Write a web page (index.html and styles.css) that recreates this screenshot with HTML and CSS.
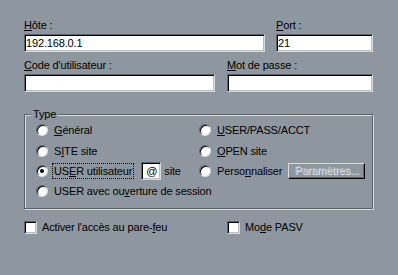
FILE: index.html
```html
<!DOCTYPE html>
<html lang="fr">
<head>
<meta charset="utf-8">
<title>Connexion</title>
<link rel="stylesheet" href="styles.css">
</head>
<body>
<div class="dlg">
  <div class="row r1">
    <div class="field host">
      <div class="lbl"><u>H</u>ôte :</div>
      <div class="edit">192.168.0.1</div>
    </div>
    <div class="field port">
      <div class="lbl"><u>P</u>ort :</div>
      <div class="edit">21</div>
    </div>
  </div>
  <div class="row r2">
    <div class="field user">
      <div class="lbl"><u>C</u>ode d'utilisateur :</div>
      <div class="edit"></div>
    </div>
    <div class="field pass">
      <div class="lbl"><u>M</u>ot de passe :</div>
      <div class="edit"></div>
    </div>
  </div>
  <div class="group">
    <span class="legend">Type</span>
    <div class="opts">
      <div class="opt"><span class="radio"></span><span class="olbl"><u>G</u>énéral</span></div>
      <div class="opt"><span class="radio"></span><span class="olbl"><u>U</u>SER/PASS/ACCT</span></div>
      <div class="opt"><span class="radio"></span><span class="olbl">S<u>I</u>TE site</span></div>
      <div class="opt"><span class="radio"></span><span class="olbl"><u>O</u>PEN site</span></div>
      <div class="opt"><span class="radio on"></span><span class="olbl focus">US<u>E</u>R utilisateur</span><span class="at">@</span><span class="site">site</span></div>
      <div class="opt"><span class="radio"></span><span class="olbl fixed">Perso<u>n</u>naliser</span><span class="btn">Paramètres...</span></div>
      <div class="opt wide"><span class="radio"></span><span class="olbl">USER avec ou<u>v</u>erture de session</span></div>
    </div>
  </div>
  <div class="row r3">
    <div class="chk fw"><span class="box"></span><span class="clbl">Activer l'accès au pare-<u>f</u>eu</span></div>
    <div class="chk"><span class="box"></span><span class="clbl">Mo<u>d</u>e PASV</span></div>
  </div>
</div>
</body>
</html>
```
FILE: styles.css
```css
html, body {
  margin: 0;
  padding: 0;
  background: #8e979f;
}
body {
  width: 398px;
  height: 275px;
  overflow: hidden;
  font-family: "Liberation Sans", Arial, sans-serif;
  font-size: 11px;
  line-height: 13px;
  letter-spacing: -0.15px;
  color: #000;
}
u { text-decoration: underline; text-underline-offset: 1px; }

.dlg {
  padding: 19px 0 0 24px;
  width: 349px;
}
.row { display: flex; }
.r1 { gap: 11px; }
.r2 { gap: 12px; margin-top: 7px; }
.host { width: 241px; }
.port { width: 97px; }
.user { width: 191px; }
.pass { width: 146px; }
.lbl { height: 13px; margin-bottom: 2px; white-space: nowrap; }

.edit {
  box-sizing: border-box;
  height: 18px;
  background: #fff;
  border: 1px solid;
  border-color: #5c646b #d6dde1 #d6dde1 #5c646b;
  box-shadow: inset 1px 1px 0 #000, inset -1px -1px 0 #b9c0c5;
  padding: 1px 0 0 1px;
  line-height: 14px;
  white-space: nowrap;
}

.group {
  position: relative;
  box-sizing: border-box;
  margin-top: 22px;
  width: 349px;
  height: 95px;
  border: 1px solid #5c646b;
  box-shadow: inset 1px 1px 0 #d6dde1, 1px 1px 0 #d6dde1;
  padding: 4px 0 0 11px;
}
.legend {
  position: absolute;
  top: -7px;
  left: 6px;
  padding: 0 2px;
  background: #8e979f;
  line-height: 13px;
}
.opts {
  display: grid;
  grid-template-columns: 163px 1fr;
  grid-template-rows: 21px 21px 20px 20px;
}
.opt {
  display: flex;
  align-items: center;
  white-space: nowrap;
}
.wide { grid-column: 1 / 3; }

.radio {
  position: relative;
  box-sizing: border-box;
  flex: none;
  width: 12px;
  height: 12px;
  border-radius: 50%;
  background: #fff;
  border: 1px solid;
  border-color: #5c646b #d6dde1 #d6dde1 #5c646b;
  box-shadow: inset 1px 1px 0 #000;
  margin-right: 4px;
}
.radio.on::after {
  content: "";
  position: absolute;
  left: 3px;
  top: 3px;
  width: 4px;
  height: 4px;
  border-radius: 50%;
  background: #000;
}
.olbl {
  display: inline-block;
  line-height: 14px;
  padding: 0 1px;
  border: 1px dotted transparent;
}
.olbl.focus { border-color: #000; }
.olbl.fixed { width: 69px; }

.at {
  box-sizing: border-box;
  width: 20px;
  height: 18px;
  margin-left: 7px;
  background: #fff;
  border: 1px solid;
  border-color: #5c646b #d6dde1 #d6dde1 #5c646b;
  box-shadow: inset 1px 1px 0 #000, inset -1px -1px 0 #b9c0c5;
  padding: 1px 0 0 4px;
  line-height: 14px;
}
.site { margin-left: 3px; }

.btn {
  box-sizing: border-box;
  width: 77px;
  height: 16px;
  border: 1px solid;
  border-color: #d6dde1 #000 #000 #d6dde1;
  box-shadow: inset -1px -1px 0 #5c646b;
  text-align: center;
  line-height: 13px;
  color: #aab1b6;
  text-shadow: 1px 1px 0 #e6ecef;
}

.r3 { margin-top: 12px; }
.chk { display: flex; align-items: center; white-space: nowrap; }
.fw { width: 203px; }
.box {
  box-sizing: border-box;
  width: 13px;
  height: 13px;
  background: #fff;
  border: 1px solid;
  border-color: #5c646b #d6dde1 #d6dde1 #5c646b;
  box-shadow: inset 1px 1px 0 #000, inset -1px -1px 0 #b9c0c5;
  margin-right: 5px;
}
```
